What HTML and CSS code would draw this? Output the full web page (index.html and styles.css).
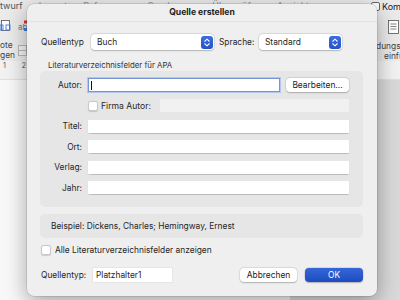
FILE: index.html
```html
<!DOCTYPE html>
<html lang="de">
<head>
  <meta charset="UTF-8" />
  <title>Quelle erstellen</title>
  <link rel="stylesheet" href="styles.css">
</head>
<body>

  <div class="app">
    <div class="menubar">
      <span class="tab">twurf</span>
      <span class="tabs-hidden">
        <span class="tab">Layout</span>
        <span class="tab">Referenzen</span>
        <span class="tab">Sendungen</span>
        <span class="tab">Überprüfen</span>
        <span class="tab">Ansicht</span>
      </span>
      <span class="kom"><span class="kom-box"></span>Kom</span>
    </div>

    <div class="ribbon">
      <div class="rb-left">
        <div class="rb-icons">
          <svg width="12" height="13" viewBox="0 0 12 13">
            <rect x="1.5" y="0.5" width="8" height="10" fill="#fff" stroke="#555" stroke-width="0.8"/>
            <rect x="0" y="5" width="3" height="5" fill="none" stroke="#3b7be0" stroke-width="0.9"/>
            <rect x="6" y="5" width="4" height="5" fill="none" stroke="#3b7be0" stroke-width="0.9"/>
          </svg>
          <svg width="10" height="12" viewBox="0 0 10 12">
            <text x="0" y="10" font-size="8" fill="#777" font-family="Inter">ab</text>
            <rect x="6" y="0.5" width="3" height="3" fill="#d33"/>
            <rect x="6" y="8" width="4" height="3" fill="#3b7be0"/>
          </svg>
        </div>
        <div class="rb-label">
          <span>ote<br>gen</span>
          <svg width="9" height="11" viewBox="0 0 9 11">
            <rect x="0.5" y="0.5" width="8" height="10" fill="#f4f4f4" stroke="#aaa" stroke-width="0.8"/>
            <line x1="1" y1="5.5" x2="8" y2="5.5" stroke="#aaa" stroke-width="0.8"/>
          </svg>
        </div>
      </div>
      <div class="rb-right">
        <svg width="12" height="14" viewBox="0 0 12 14">
          <rect x="0.5" y="0.5" width="10" height="13" fill="#fff" stroke="#555" stroke-width="0.8"/>
          <line x1="2.5" y1="4" x2="8.5" y2="4" stroke="#666" stroke-width="0.8"/>
          <line x1="2.5" y1="6.5" x2="8.5" y2="6.5" stroke="#666" stroke-width="0.8"/>
          <line x1="2.5" y1="9" x2="8.5" y2="9" stroke="#666" stroke-width="0.8"/>
        </svg>
        <span class="rb-text">dungsv<br><span class="indent">einfü</span></span>
      </div>
    </div>

    <div class="ruler">
      <span class="num">1</span><span class="num">2</span>
    </div>

    <div class="doc">
      <div class="page"></div>
      <div class="gutter"></div>
    </div>
  </div>

  <div class="dialog">
    <div class="titlebar">Quelle erstellen</div>

    <div class="type-row">
      <span class="type-label">Quellentyp</span>
      <div class="select select-type">
        <span>Buch</span>
        <span class="stepper">
          <svg width="8" height="9" viewBox="0 0 8 9">
            <polyline points="1.5,3.5 4,1.2 6.5,3.5" fill="none" stroke="#fff" stroke-width="1.1"/>
            <polyline points="1.5,5.5 4,7.8 6.5,5.5" fill="none" stroke="#fff" stroke-width="1.1"/>
          </svg>
        </span>
      </div>
      <span class="lang-label">Sprache:</span>
      <div class="select select-lang">
        <span>Standard</span>
        <span class="stepper">
          <svg width="8" height="9" viewBox="0 0 8 9">
            <polyline points="1.5,3.5 4,1.2 6.5,3.5" fill="none" stroke="#fff" stroke-width="1.1"/>
            <polyline points="1.5,5.5 4,7.8 6.5,5.5" fill="none" stroke="#fff" stroke-width="1.1"/>
          </svg>
        </span>
      </div>
    </div>

    <div class="caption">Literaturverzeichnisfelder für APA</div>

    <div class="fields">
      <div class="field">
        <span class="field-label">Autor:</span>
        <div class="input input-author focused"><span class="caret"></span></div>
        <button class="btn btn-edit">Bearbeiten...</button>
      </div>
      <div class="field">
        <span class="field-label"></span>
        <span class="check"></span>
        <span class="firma">Firma Autor:</span>
        <div class="input disabled"></div>
      </div>
      <div class="field">
        <span class="field-label">Titel:</span>
        <div class="input"></div>
      </div>
      <div class="field">
        <span class="field-label">Ort:</span>
        <div class="input"></div>
      </div>
      <div class="field">
        <span class="field-label">Verlag:</span>
        <div class="input"></div>
      </div>
      <div class="field">
        <span class="field-label">Jahr:</span>
        <div class="input"></div>
      </div>
    </div>

    <div class="example">Beispiel: Dickens, Charles; Hemingway, Ernest</div>

    <div class="check-row">
      <span class="check"></span>
      <span>Alle Literaturverzeichnisfelder anzeigen</span>
    </div>

    <div class="footer">
      <span class="footer-label">Quellentyp:</span>
      <div class="input tag-input">Platzhalter1</div>
      <button class="btn btn-cancel">Abbrechen</button>
      <button class="btn btn-ok">OK</button>
    </div>
  </div>

</body>
</html>
```

FILE: styles.css
```css
body {
  margin: 0;
  width: 400px;
  height: 300px;
  overflow: hidden;
  font-family: 'Inter', 'Liberation Sans', sans-serif;
  font-size: 8.4px;
  color: #262626;
  background-color: #f6f6f6;
}

/* word window behind the sheet */

.app {
  display: flex;
  flex-direction: column;
  height: 300px;
}

.menubar {
  height: 12px;
  display: flex;
  gap: 16px;
  background-color: #ebebeb;
  font-size: 9px;
  line-height: 11px;
  color: #444;
  white-space: nowrap;
  position: relative;
}

.tab {
  color: #555;
}

.tabs-hidden {
  display: flex;
  gap: 16px;
  height: 4px;
  overflow: hidden;
  opacity: 0.6;
}

.kom {
  position: absolute;
  left: 371px;
  top: 1px;
  display: flex;
  align-items: center;
  gap: 2px;
  color: #222;
}

.kom-box {
  width: 7px;
  height: 7px;
  border: 1px solid #666;
  border-radius: 2px;
  background-color: #fff;
}

.ribbon {
  height: 49px;
  display: flex;
  justify-content: space-between;
  background-color: #ebebeb;
  font-size: 8.4px;
  color: #444;
}

.rb-left {
  padding-top: 8px;
}

.rb-icons {
  display: flex;
  gap: 6px;
  align-items: flex-start;
}

.rb-label {
  display: flex;
  align-items: center;
  gap: 3px;
  margin-top: 7px;
  line-height: 10px;
}

.rb-right {
  width: 24px;
  padding-top: 8px;
  display: flex;
  flex-direction: column;
  align-items: flex-end;
  gap: 7px;
  overflow: hidden;
}

.rb-text {
  line-height: 10px;
  white-space: nowrap;
  align-self: flex-start;
}

.indent {
  padding-left: 8px;
}

.ruler {
  height: 18px;
  border-bottom: 1px solid #e0e0e0;
  display: flex;
  gap: 16px;
  padding-left: 3px;
  font-size: 7px;
  line-height: 9px;
  color: #555;
  background-image: linear-gradient(90deg, transparent 0, transparent 1.5px, #999 1.5px, #999 2.2px, transparent 2.2px);
  background-size: 4.7px 3px;
  background-repeat: repeat-x;
  background-position: 0 9px;
  background-color: #f2f2f2;
}

.doc {
  flex: 1;
  display: flex;
}

.page {
  flex: 1;
  background-color: #f8f8f8;
}

.gutter {
  width: 110px;
  background-color: #d9d9d9;
}

/* the sheet */

.dialog {
  position: absolute;
  left: 27px;
  top: 4px;
  width: 350px;
  height: 292px;
  box-sizing: border-box;
  padding: 0 14px 0 13px;
  background-color: #efefef;
  border-radius: 7px;
  box-shadow: 0 0 0 0.5px rgba(0, 0, 0, 0.18), 0 6px 22px rgba(0, 0, 0, 0.35);
}

.titlebar {
  height: 18px;
  line-height: 17px;
  margin: 0 -14px 0 -13px;
  text-align: center;
  font-weight: 700;
  font-size: 8.6px;
  color: #222;
  border-bottom: 1px solid #e3e3e3;
  box-sizing: border-box;
}

.type-row {
  display: flex;
  align-items: center;
  height: 16px;
  margin-top: 12px;
}

.type-label {
  width: 50px;
  padding-left: 1px;
}

.lang-label {
  width: 45px;
  padding-left: 5px;
  box-sizing: border-box;
}

.select {
  height: 16px;
  box-sizing: border-box;
  display: flex;
  align-items: center;
  justify-content: space-between;
  padding: 0 1.5px 0 6px;
  background-color: #fff;
  border-radius: 4px;
  box-shadow: 0 0 0 0.5px rgba(0, 0, 0, 0.12), 0 0.5px 1.5px rgba(0, 0, 0, 0.2);
}

.select-type {
  width: 123px;
}

.select-lang {
  width: 83px;
}

.stepper {
  width: 12px;
  height: 13px;
  border-radius: 3px;
  background: linear-gradient(#3b6fe0, #2453c7);
  display: flex;
  align-items: center;
  justify-content: center;
}

.caption {
  font-size: 7.8px;
  line-height: 10px;
  margin: 10px 0 1px 8px;
  color: #333;
}

.fields {
  background-color: #e6e6e6;
  border-radius: 5px;
  padding: 7px 14px 12px 0;
  display: flex;
  flex-direction: column;
  gap: 6.6px;
}

.field {
  height: 14px;
  display: flex;
  align-items: center;
  gap: 6px;
}

.field-label {
  width: 42px;
  text-align: right;
  flex-shrink: 0;
}

.input {
  flex: 1;
  height: 13px;
  background-color: #fff;
  box-shadow: 0 0.5px 1px rgba(0, 0, 0, 0.18);
  display: flex;
  align-items: center;
}

.input-author {
  flex: none;
  width: 192px;
  height: 14px;
  box-sizing: border-box;
}

.focused {
  border: 1px solid #7594d9;
  box-shadow: 0 0 0 1px #b3c6ef;
  padding-left: 2px;
}

.caret {
  width: 1px;
  height: 9px;
  background-color: #111;
}

.disabled {
  background-color: #f1f1f1;
  box-shadow: none;
  margin-left: 3px;
}

.check {
  width: 10px;
  height: 10px;
  box-sizing: border-box;
  border: 0.5px solid #c8c8c8;
  border-radius: 2.5px;
  background-color: #fff;
  box-shadow: 0 0.5px 1px rgba(0, 0, 0, 0.15);
  flex-shrink: 0;
}

.firma {
  margin-left: -3px;
  font-size: 8.6px;
}

.btn {
  font-family: inherit;
  font-size: 8.4px;
  color: #222;
  height: 14px;
  padding: 0;
  border: none;
  border-radius: 4px;
  background-color: #fff;
  box-shadow: 0 0 0 0.5px rgba(0, 0, 0, 0.1), 0 0.5px 1.5px rgba(0, 0, 0, 0.22);
}

.btn-edit {
  width: 63px;
}

.example {
  margin-top: 7px;
  height: 24px;
  line-height: 24px;
  padding-left: 11px;
  background-color: #e6e6e6;
  border-radius: 5px;
}

.check-row {
  margin-top: 7px;
  height: 10px;
  display: flex;
  align-items: center;
  gap: 4px;
  padding-left: 1px;
}

.footer {
  margin-top: 13px;
  height: 14px;
  display: flex;
  align-items: center;
}

.footer-label {
  width: 52px;
  padding-left: 1px;
}

.tag-input {
  flex: none;
  width: 79px;
  height: 14px;
  padding-left: 3px;
  box-sizing: border-box;
  box-shadow: 0 0 0 0.5px rgba(0, 0, 0, 0.08);
}

.btn-cancel {
  width: 57px;
  margin-left: auto;
}

.btn-ok {
  width: 58px;
  margin-left: 8px;
  color: #fff;
  background: linear-gradient(#3566d8, #1e4cc0);
}
```
